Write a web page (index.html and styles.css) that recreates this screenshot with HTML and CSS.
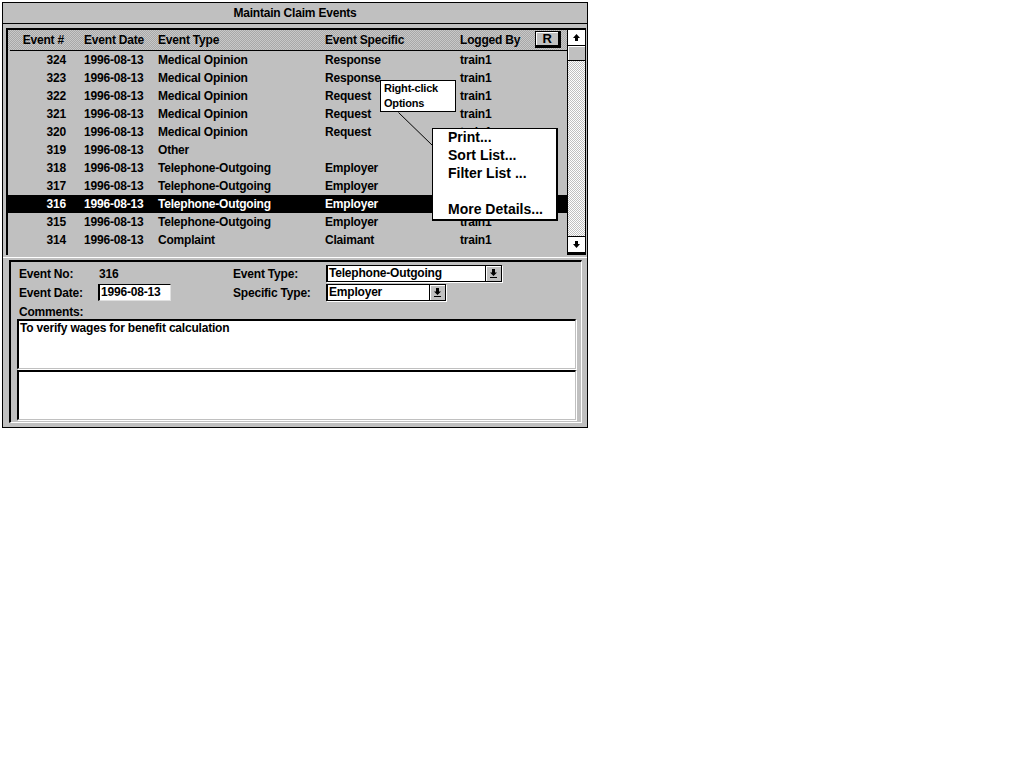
FILE: index.html
```html
<!DOCTYPE html>
<html>
<head>
<meta charset="utf-8">
<title>Maintain Claim Events</title>
<link rel="stylesheet" href="styles.css">
</head>
<body>
<div class="window">
  <div class="titlebar">Maintain Claim Events</div>
  <div class="listpanel">
    <div class="list">
      <div class="row head">
        <span class="c1">Event #</span><span>Event Date</span><span>Event Type</span><span>Event Specific</span>
        <span class="c5">Logged By <span class="rbtn">R</span></span>
      </div>
      <div class="row"><span class="c1">324</span><span>1996-08-13</span><span>Medical Opinion</span><span>Response</span><span>train1</span></div>
      <div class="row"><span class="c1">323</span><span>1996-08-13</span><span>Medical Opinion</span><span>Response</span><span>train1</span></div>
      <div class="row"><span class="c1">322</span><span>1996-08-13</span><span>Medical Opinion</span><span>Request</span><span>train1</span></div>
      <div class="row"><span class="c1">321</span><span>1996-08-13</span><span>Medical Opinion</span><span>Request</span><span>train1</span></div>
      <div class="row"><span class="c1">320</span><span>1996-08-13</span><span>Medical Opinion</span><span>Request</span><span>train1</span></div>
      <div class="row"><span class="c1">319</span><span>1996-08-13</span><span>Other</span><span></span><span>train1</span></div>
      <div class="row"><span class="c1">318</span><span>1996-08-13</span><span>Telephone-Outgoing</span><span>Employer</span><span>train1</span></div>
      <div class="row"><span class="c1">317</span><span>1996-08-13</span><span>Telephone-Outgoing</span><span>Employer</span><span>train1</span></div>
      <div class="row selected"><span class="c1">316</span><span>1996-08-13</span><span>Telephone-Outgoing</span><span>Employer</span><span>train1</span></div>
      <div class="row"><span class="c1">315</span><span>1996-08-13</span><span>Telephone-Outgoing</span><span>Employer</span><span>train1</span></div>
      <div class="row"><span class="c1">314</span><span>1996-08-13</span><span>Complaint</span><span>Claimant</span><span>train1</span></div>
    </div>
    <div class="scrollbar">
      <div class="sb-btn"><svg width="9" height="9" viewBox="0 0 9 9"><path d="M4.5 1 L8 5 L6 5 L6 8 L3 8 L3 5 L1 5 Z" fill="#000"/></svg></div>
      <div class="sb-thumb"></div>
      <div class="sb-track"></div>
      <div class="sb-btn down"><svg width="9" height="9" viewBox="0 0 9 9"><path d="M4.5 8 L8 4 L6 4 L6 1 L3 1 L3 4 L1 4 Z" fill="#000"/></svg></div>
    </div>
  </div>
  <div class="detail">
    <div class="detail-inner">
      <div class="form">
        <span class="lbl">Event No:</span><span class="val">316</span>
        <span class="lbl">Event Type:</span>
        <span class="combo wide"><span class="combo-text">Telephone-Outgoing</span><span class="combo-btn"><svg width="11" height="11" viewBox="0 0 11 11"><path d="M5.5 8 L9 4.5 L7 4.5 L7 1 L4 1 L4 4.5 L2 4.5 Z" fill="#000"/><rect x="2" y="9" width="7" height="1" fill="#000"/></svg></span></span>
        <span class="lbl">Event Date:</span><span class="val"><span class="input">1996-08-13</span></span>
        <span class="lbl">Specific Type:</span>
        <span class="combo narrow"><span class="combo-text">Employer</span><span class="combo-btn"><svg width="11" height="11" viewBox="0 0 11 11"><path d="M5.5 8 L9 4.5 L7 4.5 L7 1 L4 1 L4 4.5 L2 4.5 Z" fill="#000"/><rect x="2" y="9" width="7" height="1" fill="#000"/></svg></span></span>
      </div>
      <div class="lbl comments-lbl">Comments:</div>
      <div class="textbox">To verify wages for benefit calculation</div>
      <div class="textbox"></div>
    </div>
  </div>

  <div class="callout">Right-click<br>Options</div>
  <svg class="leader" width="40" height="40" viewBox="0 0 40 40"><line x1="0.5" y1="0.5" x2="34.5" y2="33.5" stroke="#000" stroke-width="1"/></svg>
  <div class="menu">
    <div class="mi">Print...</div>
    <div class="mi">Sort List...</div>
    <div class="mi">Filter List ...</div>
    <div class="mi"></div>
    <div class="mi">More Details...</div>
  </div>
</div>
</body>
</html>
```

FILE: styles.css
```css
html, body {
  margin: 0;
  background: #fff;
}
body {
  font: bold 12px "Liberation Sans", Arial, sans-serif;
  color: #000;
  letter-spacing: -0.2px;
}
.window {
  position: relative;
  margin: 2px 0 0 2px;
  width: 586px;
  height: 426px;
  box-sizing: border-box;
  border: 1px solid #000;
  background: #c0c0c0;
  display: flex;
  flex-direction: column;
}
.titlebar {
  height: 20px;
  line-height: 20px;
  text-align: center;
  border-bottom: 1px solid #000;
  flex: none;
}
.listpanel {
  margin: 4px 0 0 3px;
  width: 580px;
  height: 227px;
  box-sizing: border-box;
  border-top: 2px solid #000;
  border-left: 2px solid #000;
  display: flex;
  flex: none;
}
.list {
  flex: 1;
  overflow: hidden;
}
.row {
  display: grid;
  grid-template-columns: 76px 74px 167px 135px 1fr;
  height: 18px;
  line-height: 18px;
  white-space: nowrap;
}
.row .c1 {
  text-align: right;
  padding-right: 18px;
}
.row.head {
  height: 21px;
  line-height: 20px;
  background: repeating-conic-gradient(#a8a8a8 0 25%, #c8c8c8 0 50%) 0 0 / 2px 2px;
  position: relative;
}
.row.head::after {
  content: "";
  position: absolute;
  left: 2px;
  right: 0;
  bottom: 0;
  height: 1px;
  background: #000;
}
.row.head .c1 {
  padding-right: 20px;
}
.c5 {
  display: flex;
  justify-content: space-between;
  align-items: flex-start;
  padding-right: 6px;
}
.rbtn {
  width: 22px;
  height: 13px;
  margin-top: 1px;
  line-height: 13px;
  text-align: center;
  font-size: 13px;
  background: #c0c0c0;
  border: 1px solid #000;
  border-right-width: 3px;
  border-bottom-width: 3px;
  box-shadow: inset 1px 1px 0 #fff;
}
.row.selected {
  background: #000;
  color: #fff;
}
.scrollbar {
  width: 17px;
  border-left: 1px solid #000;
  border-right: 1px solid #000;
  display: flex;
  flex-direction: column;
  flex: none;
}
.sb-btn {
  height: 15px;
  background: #fff;
  border-bottom: 1px solid #000;
  display: flex;
  align-items: center;
  justify-content: center;
}
.sb-btn.down {
  border-top: 1px solid #000;
  border-bottom: 3px solid #000;
}
.sb-thumb {
  height: 14px;
  background: #c0c0c0;
  border-bottom: 1px solid #000;
  box-shadow: inset 1px 1px 0 #fff;
}
.sb-track {
  flex: 1;
  background: repeating-conic-gradient(#c0c0c0 0 25%, #fff 0 50%) 0 0 / 2px 2px;
}
.detail {
  margin-top: 2px;
  flex: 1;
  border-top: 1px solid #fff;
  padding: 2px 5px 4px 6px;
  display: flex;
}
.detail-inner {
  flex: 1;
  border-top: 2px solid #000;
  border-left: 2px solid #000;
  border-right: 1px solid #fff;
  border-bottom: 1px solid #fff;
  padding: 2px 3px 0 6px;
  display: flex;
  flex-direction: column;
}
.form {
  display: grid;
  grid-template-columns: 79px 135px 93px 1fr;
  grid-auto-rows: 19px;
  align-items: center;
  padding-left: 2px;
}
.lbl {
  white-space: nowrap;
}
.val {
  padding-left: 1px;
}
.input {
  display: block;
  width: 69px;
  height: 15px;
  line-height: 15px;
  background: #fff;
  border-top: 1px solid #000;
  border-left: 2px solid #000;
  border-right: 1px solid #e0e0e0;
  border-bottom: 1px solid #e0e0e0;
  padding-left: 1px;
  margin-left: -1px;
  font-weight: bold;
}
.combo {
  display: flex;
  height: 15px;
  background: #fff;
  border-top: 1px solid #000;
  border-left: 2px solid #000;
  border-bottom: 1px solid #000;
  border-right: 1px solid #000;
  box-shadow: 1px 1px 0 #fff;
}
.combo.wide { width: 173px; }
.combo.narrow { width: 117px; }
.combo-text {
  flex: 1;
  line-height: 15px;
  padding-left: 1px;
}
.combo-btn {
  width: 15px;
  background: #c0c0c0;
  border-left: 1px solid #000;
  box-shadow: inset 1px 1px 0 #fff;
  display: flex;
  align-items: center;
  justify-content: center;
}
.comments-lbl {
  height: 17px;
  line-height: 20px;
  padding-left: 2px;
}
.textbox {
  height: 47px;
  background: #fff;
  border-top: 2px solid #000;
  border-left: 2px solid #000;
  border-right: 1px solid #c0c0c0;
  border-bottom: 1px solid #c0c0c0;
  box-shadow: 1px 1px 0 #fff;
  margin-right: 2px;
  margin-bottom: 1px;
  line-height: 14px;
  padding-left: 1px;
}
.callout {
  position: absolute;
  left: 377px;
  top: 77px;
  width: 71px;
  height: 30px;
  background: #fff;
  border: 1px solid #000;
  font-size: 11px;
  line-height: 15px;
  padding-left: 3px;
}
.leader {
  position: absolute;
  left: 395px;
  top: 109px;
  overflow: visible;
}
.menu {
  position: absolute;
  left: 429px;
  top: 125px;
  width: 123px;
  background: #fff;
  border: 1px solid #000;
  border-right-width: 2px;
  border-bottom-width: 2px;
}
.mi {
  height: 18px;
  line-height: 16px;
  padding-left: 15px;
  font-size: 14px;
  letter-spacing: 0;
}
```
